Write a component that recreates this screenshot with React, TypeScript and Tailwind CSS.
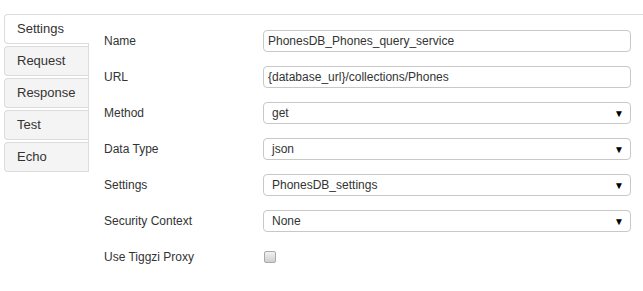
const tabs = ["Settings", "Request", "Response", "Test", "Echo"];

type Field =
  | { label: string; kind: "text"; value: string }
  | { label: string; kind: "select"; value: string }
  | { label: string; kind: "check" };

const fields: Field[] = [
  { label: "Name", kind: "text", value: "PhonesDB_Phones_query_service" },
  { label: "URL", kind: "text", value: "{database_url}/collections/Phones" },
  { label: "Method", kind: "select", value: "get" },
  { label: "Data Type", kind: "select", value: "json" },
  { label: "Settings", kind: "select", value: "PhonesDB_settings" },
  { label: "Security Context", kind: "select", value: "None" },
  { label: "Use Tiggzi Proxy", kind: "check" },
];

function Control({ field }: { field: Field }) {
  if (field.kind === "check") {
    return (
      <div className="flex h-[22px] items-center pl-[1px]">
        <span className="h-[12px] w-[12px] rounded-[2px] border border-[#a9a9a9] bg-gradient-to-b from-[#f2f2f2] to-[#cfcfcf]" />
      </div>
    );
  }
  if (field.kind === "select") {
    return (
      <div className="flex h-[22px] w-[368px] items-center justify-between rounded-[4px] border border-[#c8c8c8] bg-white pl-[8px] pr-[6px]">
        <span>{field.value}</span>
        <span className="text-[10px] text-black">▼</span>
      </div>
    );
  }
  return (
    <div className="flex h-[22px] w-[368px] items-center rounded-[4px] border border-[#c8c8c8] bg-white pl-[4px]">
      {field.value}
    </div>
  );
}

export default function App() {
  return (
    <div
      className="flex h-[291px] w-[643px] bg-white pt-[14px] text-[#333]"
      style={{ fontFamily: '"Liberation Sans", Arial, sans-serif' }}
    >
      <ul className="ml-[4px] flex h-[158px] w-[85px] flex-col gap-[2px] border-r border-[#dcdcdc]">
        {tabs.map((t, i) => (
          <li
            key={t}
            className={
              i === 0
                ? "mr-[-1px] flex h-[30px] items-center rounded-l-[4px] border border-r-0 border-[#dcdcdc] bg-white pl-[12px] text-[13px]"
                : "flex h-[30px] items-center rounded-l-[4px] border border-r-0 border-[#dcdcdc] bg-[#f4f4f4] pl-[12px] text-[13px]"
            }
          >
            {t}
          </li>
        ))}
      </ul>
      <div className="flex-1 border-t border-[#dcdcdc] pl-[15px] pt-[15px] text-[12px]">
        <div className="flex flex-col gap-[14px]">
          {fields.map((f) => (
            <div key={f.label} className="flex items-center">
              <div className="w-[159px]">{f.label}</div>
              <Control field={f} />
            </div>
          ))}
        </div>
      </div>
    </div>
  );
}
